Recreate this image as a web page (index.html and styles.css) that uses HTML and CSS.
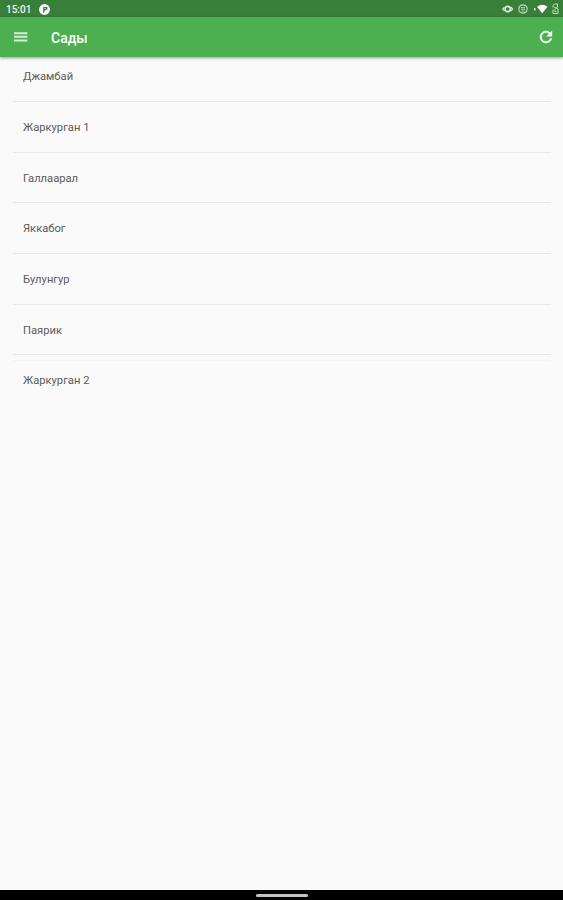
FILE: index.html
```
<!DOCTYPE html>
<html lang="ru">
<head>
    <meta charset="UTF-8">
    <title>Сады</title>
    <link rel="stylesheet" href="styles.css">
</head>
<body>
<div class="status-bar">
    <span class="time">15:01</span>
    <svg class="app-icon" width="11" height="11" viewBox="0 0 11 11">
        <circle cx="5.5" cy="5.5" r="5.4" fill="#fff"/>
        <path d="M4.200 3h4.200v2.600L6.200 6.300 4.600 9H4.200z" fill="#388039"/>
        <path d="M5.500 4.400h1.400" stroke="#fff" stroke-width=".8"/>
    </svg>
    <svg class="system-icons" width="58" height="12" viewBox="0 0 58 12">
        <g fill="none" stroke="#dceddc">
            <circle cx="5.700" cy="6" r="2.700" stroke-width="1.700"/>
            <path d="M2.500 4.200L.8 6l1.700 1.800M8.900 4.200L10.600 6 8.900 7.800" stroke-width="1.200"/>
            <circle cx="21" cy="6" r="4.200" stroke-width="1.200" opacity=".8"/>
            <path d="M19 4.600h4M19 6.200h4M19.500 8h3" stroke-width=".9" opacity=".8"/>
            <path d="M51 4.500V2.500L52.500 1h3v3l-4 4M51 6.500v4h5V6l-4-2M52.500 8.500h2" stroke-width="1" opacity=".85"/>
        </g>
        <path d="M32 5h1.500v2.500H32z" fill="#dceddc"/>
        <path d="M35 3.800Q40.200-.3 45.400 3.800L40.200 10.300z" fill="#fff"/>
    </svg>
</div>
<header class="toolbar">
    <svg class="menu" width="14" height="10" viewBox="0 0 14 10">
        <path d="M0 1.200h13.400M0 4.800h13.400M0 8.400h13.400" stroke="#d5efd6" stroke-width="2"/>
    </svg>
    <h1>Сады</h1>
    <svg class="refresh" width="18" height="18" viewBox="0 0 24 24">
        <path d="M17.650 6.350C16.200 4.900 14.210 4 12 4c-4.420 0-7.990 3.580-7.990 8s3.570 8 7.990 8c3.730 0 6.840-2.550 7.730-6h-2.080c-.82 2.330-3.040 4-5.650 4-3.310 0-6-2.690-6-6s2.690-6 6-6c1.660 0 3.140.69 4.220 1.780L13 11h7V4l-2.350 2.350z" fill="#fff" stroke="#fff" stroke-width=".5"/>
    </svg>
</header>
<main>
    <ul class="gardens">
        <li>Джамбай</li>
        <li>Жаркурган 1</li>
        <li>Галлаарал</li>
        <li>Яккабог</li>
        <li>Булунгур</li>
        <li>Паярик</li>
        <li class="last">Жаркурган 2</li>
    </ul>
</main>
<footer class="nav-bar">
    <div class="handle"></div>
</footer>
</body>
</html>
```

FILE: styles.css
```
* {
    padding: 0;
    margin: 0;
    box-sizing: border-box;
}
body {
    height: 100vh;
    display: flex;
    flex-direction: column;
    overflow: hidden;
    font-family: Roboto, "Noto Sans", sans-serif;
    background-color: #fafafa;
}
.status-bar {
    height: 17px;
    display: flex;
    align-items: center;
    flex-shrink: 0;
    padding: 1px 3px 0 6px;
    background-color: #388039;
    color: #f0f7f0;
}
.time {
    width: 33px;
    font-size: 10px;
    font-weight: 500;
}
.system-icons {
    margin-left: auto;
}
.toolbar {
    height: 40px;
    display: flex;
    align-items: center;
    flex-shrink: 0;
    position: relative;
    z-index: 1;
    padding: 0 8px 0 14px;
    background-color: #4caf50;
    box-shadow: 0 1px 3px rgba(0, 0, 0, 0.4);
}
.toolbar h1 {
    margin-left: 23px;
    padding-top: 1px;
    font-size: 14px;
    font-weight: 500;
    color: white;
}
.refresh {
    margin-left: auto;
}
main {
    flex: 1;
}
.gardens {
    margin: -5.6px 12px 0 13px;
    list-style: none;
}
.gardens li {
    height: 50.65px;
    padding-left: 10px;
    border-bottom: 1px solid #e9e9e9;
    font-size: 11.2px;
    line-height: 52px;
    color: #5c5c5c;
}
.gardens .last {
    border-bottom: none;
    background: linear-gradient(#f3f3f3, #f3f3f3) 0 5px / 100% 1px no-repeat;
}
.nav-bar {
    height: 10px;
    display: flex;
    align-items: center;
    justify-content: center;
    background-color: black;
}
.handle {
    width: 52px;
    height: 3px;
    border-radius: 2px;
    background-color: #c4c4c4;
}
```
